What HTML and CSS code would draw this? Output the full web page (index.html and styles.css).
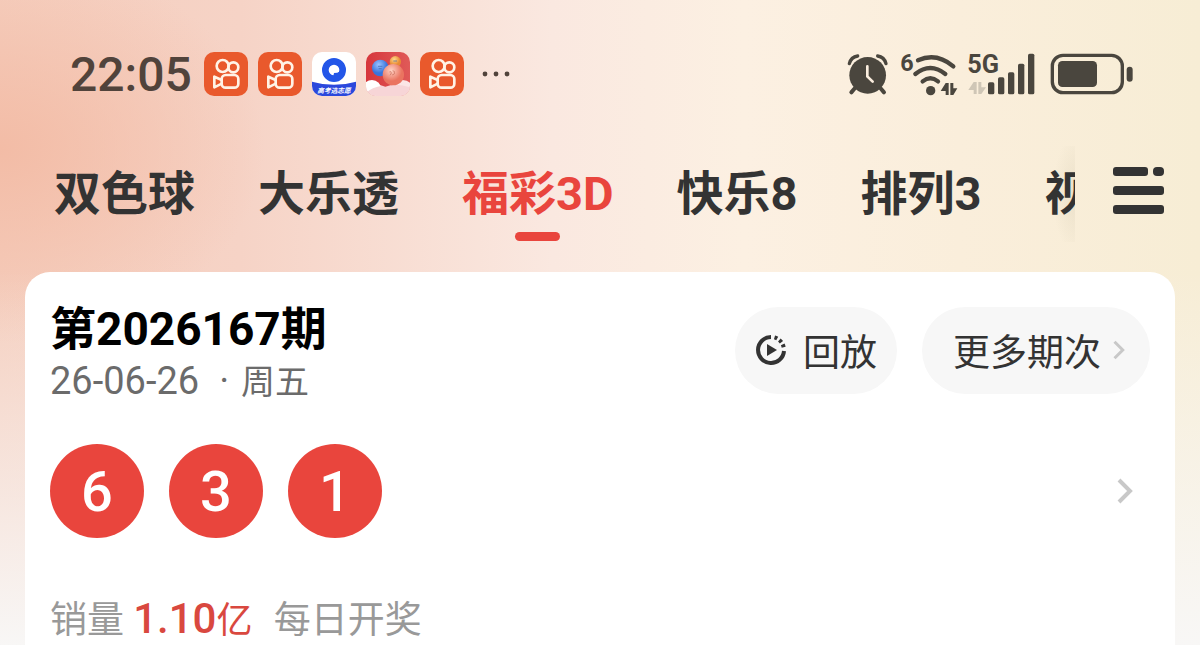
FILE: index.html
```html
<!DOCTYPE html>
<html lang="zh-CN">
<head>
  <meta charset="UTF-8">
  <meta name="viewport" content="width=device-width, initial-scale=1">
  <title>福彩3D</title>
  <link rel="stylesheet" href="styles.css">
</head>
<body>

<svg class="defs" aria-hidden="true">
  <symbol id="camera" viewBox="0 0 132 132">
    <rect width="132" height="132" rx="30" fill="#e9592c"/>
    <g fill="none" stroke="#fff3e6" stroke-width="8" stroke-linejoin="round">
      <circle cx="56" cy="42" r="18"/>
      <circle cx="88" cy="46" r="15"/>
      <rect x="53" y="69" width="50" height="38" rx="12"/>
      <path d="M53 84 L31 74 V106 L53 95"/>
    </g>
  </symbol>
  <symbol id="chevron" viewBox="0 0 16 26">
    <path d="M2 2 L13 13 L2 24" fill="none" stroke="currentColor" stroke-width="4"/>
  </symbol>
</svg>

<div class="status">
  <span class="clock">22:05</span>
  <div class="apps">
    <svg class="app"><use href="#camera"/></svg>
    <svg class="app"><use href="#camera"/></svg>
    <svg class="app" viewBox="0 0 132 132">
      <clipPath id="round"><rect width="132" height="132" rx="30"/></clipPath>
      <g clip-path="url(#round)">
        <rect width="132" height="132" fill="#fff"/>
        <path d="M0 89 Q66 108 132 89 V132 H0 Z" fill="#2b48dc"/>
        <circle cx="66" cy="54" r="26" fill="none" stroke="#2356e8" stroke-width="20"/>
        <path d="M64 72 L66 63 L76 62 L84 58 L82 74 Z" fill="#2356e8"/>
        <text x="66" y="122" class="app-label">高考选志愿</text>
      </g>
    </svg>
    <svg class="app" viewBox="0 0 132 132">
      <radialGradient id="blue" cx=".4" cy=".3"><stop offset="0" stop-color="#9cc4ff"/><stop offset="1" stop-color="#3974dc"/></radialGradient>
      <radialGradient id="gold" cx=".4" cy=".3"><stop offset="0" stop-color="#ffd98c"/><stop offset="1" stop-color="#e88a35"/></radialGradient>
      <radialGradient id="coral" cx=".4" cy=".3"><stop offset="0" stop-color="#ffd2c4"/><stop offset="1" stop-color="#ea7460"/></radialGradient>
      <linearGradient id="sky" x2="1"><stop offset="0" stop-color="#d6363c"/><stop offset="1" stop-color="#e05a58"/></linearGradient>
      <g clip-path="url(#round)">
        <rect width="132" height="132" fill="url(#sky)"/>
        <circle cx="18" cy="112" r="28" fill="#fff"/>
        <circle cx="110" cy="118" r="34" fill="#fbe6e6"/>
        <circle cx="88" cy="29" r="17" fill="url(#gold)"/>
        <circle cx="43" cy="48" r="25" fill="url(#blue)"/>
        <path d="M0 110 Q30 92 58 104 Q90 92 132 106 V132 H0 Z" fill="#f7d5d7"/>
        <path d="M0 90 Q26 82 44 102 Q20 106 0 122 Z" fill="#fff"/>
        <circle cx="82" cy="68" r="32" fill="url(#coral)"/>
        <path d="M70 60 Q76 56 76 63 L72 70 M80 56 Q88 56 85 66 Q80 72 77 66" fill="none" stroke="#c9705c" stroke-width="2"/>
        <path d="M36 43 H49 M38 50 H47 M82 27 H93" stroke="#3c62a8" stroke-width="2"/>
      </g>
    </svg>
    <svg class="app"><use href="#camera"/></svg>
  </div>
  <svg class="more" viewBox="0 0 30 6"><circle cx="3" cy="3" r="2.4"/><circle cx="14" cy="3" r="2.4"/><circle cx="25" cy="3" r="2.4"/></svg>

  <div class="system">
    <svg class="alarm" viewBox="36 38 126 126">
      <circle cx="98" cy="105" r="55"/>
      <path d="M60 143 L49 156 M136 143 L147 156" class="line" stroke-width="12"/>
      <path d="M43 70 Q48 50 68 47 M153 70 Q148 50 128 47" class="line" stroke-width="10"/>
      <path d="M97 78 V108 L113 124" class="hand"/>
    </svg>
    <svg class="wifi" viewBox="198 28 168 132">
      <text x="196" y="84" font-size="70">6</text>
      <g class="line" stroke-width="13">
        <path d="M249 53 Q304 28 355 71"/>
        <path d="M241 94 Q286 58 331 94"/>
        <path d="M263 116 Q286 98 309 116"/>
      </g>
      <circle cx="287" cy="144" r="14"/>
      <path d="M332 121 H341 V157 H332 V145 H317 Z M346 121 H355 V137 H367 L355 157 H346 Z"/>
    </svg>
    <svg class="signal" viewBox="400 34 204 126">
      <text x="398" y="95" font-size="76">5G</text>
      <path class="faint" d="M417 121 H426 V157 H417 V145 H401 Z M431 121 H440 V137 H454 L440 157 H431 Z"/>
      <rect x="460" y="122" width="19" height="36" rx="5"/>
      <rect x="490" y="107" width="19" height="51" rx="5"/>
      <rect x="520" y="92" width="19" height="66" rx="5"/>
      <rect x="550" y="66" width="19" height="92" rx="5"/>
      <rect x="580" y="36" width="19" height="122" rx="5"/>
    </svg>
    <svg class="battery" viewBox="646 34 249 126">
      <rect x="653" y="41" width="210" height="112" rx="32" class="line" stroke-width="10"/>
      <rect x="670" y="58" width="117" height="78" rx="13"/>
      <rect x="876" y="75" width="18" height="45" rx="9"/>
    </svg>
  </div>
</div>

<div class="bar">
  <nav class="tabs">
    <a href="#ssq">双色球</a>
    <a href="#dlt">大乐透</a>
    <a href="#fc3d" class="active">福彩3D</a>
    <a href="#kl8">快乐8</a>
    <a href="#pl3">排列3</a>
    <a href="#video">视频</a>
  </nav>
  <button class="menu" aria-label="全部彩种">
    <svg viewBox="0 0 51 47">
      <rect width="35" height="9" rx="3"/><rect x="40" width="11" height="9" rx="4"/>
      <rect y="19" width="51" height="9" rx="3"/>
      <rect y="38" width="51" height="9" rx="3"/>
    </svg>
  </button>
</div>

<main class="card">
  <div class="card-head">
    <div>
      <h1>第2026167期</h1>
      <p class="date">26-06-26<span class="dot">·</span><span class="weekday">周五</span></p>
    </div>
    <div class="actions">
      <button class="pill">
        <svg class="replay" viewBox="0 0 32 32">
          <path d="M16 3 A13 13 0 1 0 29 17" fill="none" stroke="currentColor" stroke-width="4"/>
          <path d="M19.5 3.400 A13 13 0 0 1 28.800 14" fill="none" stroke="currentColor" stroke-width="4" stroke-dasharray="3 2.500"/>
          <path d="M12 10 L22 16 L12 22 Z" fill="currentColor"/>
        </svg>
        回放
      </button>
      <button class="pill">更多期次<svg class="chevron small"><use href="#chevron"/></svg></button>
    </div>
  </div>

  <a href="#detail" class="result">
    <span class="ball">6</span>
    <span class="ball">3</span>
    <span class="ball">1</span>
    <svg class="chevron"><use href="#chevron"/></svg>
  </a>

  <p class="sales">销量 <strong>1.10<span>亿</span></strong> <span class="daily">每日开奖</span></p>
</main>

</body>
</html>
```
FILE: styles.css
```css
* {
  box-sizing: border-box;
}
body {
  margin: 0;
  min-height: 100vh;
  display: flex;
  flex-direction: column;
  font-family: Roboto, "Noto Sans CJK SC", sans-serif;
  color: #333;
  background:
    linear-gradient(to bottom, rgba(248, 247, 246, 0) 42%, #f8f7f6 100%),
    radial-gradient(ellipse 22% 30% at 0 23%, #f3bca6 0%, rgba(243, 188, 166, 0) 100%),
    linear-gradient(to right, #f5cebe 0%, #f6d3c6 20%, #fae8e0 46%, #fcf0e2 62%, #faeedb 80%, #f7edd5 100%);
}
h1, p {
  margin: 0;
}
a {
  color: inherit;
  text-decoration: none;
}
button {
  border: none;
  padding: 0;
  font: inherit;
  color: inherit;
  background: none;
  cursor: pointer;
}
svg {
  display: block;
  flex: none;
}
.defs {
  position: absolute;
  width: 0;
  height: 0;
}

/* status bar */
.status {
  display: flex;
  align-items: center;
  height: 44px;
  margin: 52px 67px 0 70px;
}
.clock {
  width: 134px;
  font-size: 48px;
  font-weight: 500;
  color: #51433b;
}
.apps {
  display: flex;
  gap: 10px;
}
.app {
  width: 44px;
  height: 44px;
}
.app-label {
  font-size: 20px;
  font-weight: 700;
  font-style: italic;
  text-anchor: middle;
  fill: #fff;
}
.more {
  width: 30px;
  height: 6px;
  margin-left: 18px;
  fill: #51433b;
}
.system {
  display: flex;
  align-items: center;
  margin-left: auto;
  fill: #4a463e;
  font-weight: 700;
}
.system svg {
  overflow: visible;
}
.line {
  fill: none;
  stroke: #4a463e;
  stroke-linecap: round;
}
.hand {
  fill: none;
  stroke: #fbeedf;
  stroke-width: 8;
  stroke-linecap: round;
}
.faint {
  fill: #cfc6b6;
}
.alarm {
  width: 42px;
  height: 42px;
}
.wifi {
  width: 56px;
  height: 44px;
  margin-left: 12px;
}
.signal {
  width: 68px;
  height: 42px;
  margin-left: 11px;
}
.battery {
  width: 83px;
  height: 42px;
  margin-left: 14px;
}

/* lottery tabs */
.bar {
  display: flex;
  align-items: center;
  justify-content: space-between;
  margin: 50px 36px 30px 54px;
}
.tabs {
  display: flex;
  flex: 1;
  gap: 63px;
  margin-right: 38px;
  overflow: hidden;
  font-size: 47px;
  font-weight: 700;
  line-height: 96px;
  white-space: nowrap;
  background: radial-gradient(ellipse 22px 60px at 100% 50%, rgba(160, 150, 120, 0.15), rgba(160, 150, 120, 0));
}
.tabs a {
  position: relative;
  flex: none;
}
.tabs .active {
  color: #e9453d;
}
.tabs .active::after {
  content: "";
  position: absolute;
  left: 50%;
  bottom: 1px;
  width: 45px;
  height: 9px;
  margin-left: -23px;
  border-radius: 5px;
  background: #e9453d;
}
.menu {
  padding-bottom: 8px;
}
.menu svg {
  width: 51px;
  height: 47px;
  fill: #333;
}

/* draw result */
.card {
  flex: 1;
  margin: 0 25px;
  padding: 31px 25px 0;
  border-radius: 25px 25px 0 0;
  background: #fff;
}
.card-head {
  display: flex;
  justify-content: space-between;
}
h1 {
  font-size: 46px;
  font-weight: 700;
  line-height: 52px;
  color: #000;
}
.date {
  font-size: 38px;
  line-height: 52px;
  color: #6b6b6b;
}
.dot {
  margin: 0 12px 0 20px;
}
.weekday {
  font-size: 34px;
}
.actions {
  display: flex;
  align-items: flex-start;
  gap: 25px;
  padding-top: 4px;
}
.pill {
  display: flex;
  align-items: center;
  height: 87px;
  padding: 0 20px 2px;
  border-radius: 44px;
  font-size: 37px;
  background: #f7f7f7;
}
.pill + .pill {
  padding: 0 25px 2px 31px;
}
.replay {
  width: 32px;
  height: 32px;
  margin-right: 16px;
}
.chevron {
  width: 16px;
  height: 26px;
  margin: 0 17px 0 auto;
  color: #c8c8c8;
}
.chevron.small {
  width: 12px;
  height: 20px;
  margin: 0 0 0 12px;
}
.result {
  display: flex;
  align-items: center;
  gap: 25px;
  margin-top: 36px;
}
.ball {
  width: 94px;
  height: 94px;
  border-radius: 50%;
  font-size: 56px;
  font-weight: 500;
  line-height: 96px;
  text-align: center;
  color: #fff;
  background: #e9453d;
}
.sales {
  margin-top: 56px;
  font-size: 37px;
  line-height: 50px;
  color: #999;
}
.sales strong {
  font-size: 42px;
  font-weight: 500;
  color: #d9483f;
}
.sales strong span {
  font-size: 36px;
  font-weight: 400;
}
.daily {
  margin-left: 12px;
}
```
